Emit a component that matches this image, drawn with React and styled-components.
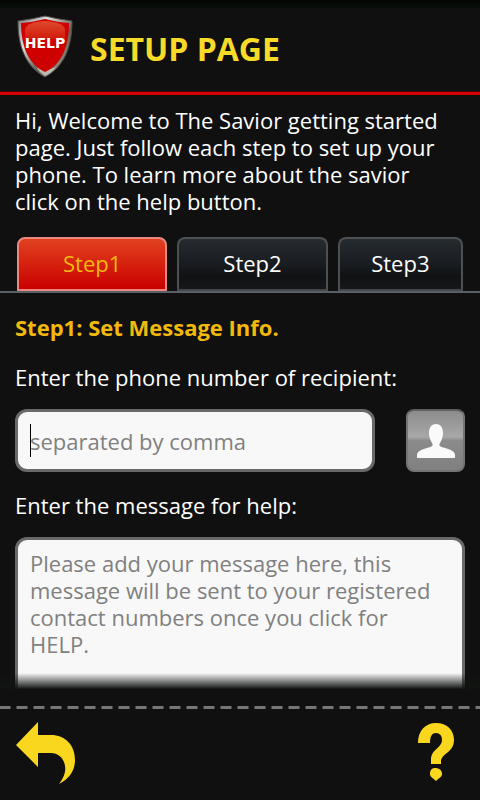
import React from "react";
import styled, { createGlobalStyle } from "styled-components";

const GlobalStyle = createGlobalStyle`
  *, *::before, *::after { box-sizing: border-box; }
  body { margin: 0; background: #101010; }
  body, button, input, textarea { font-family: "Open Sans", "Noto Sans", sans-serif; }
`;

const Page = styled.div`
  display: flex;
  flex-direction: column;
  height: 100vh;
  color: #fff;
  font-size: 22px;
  line-height: 27px;
  background: linear-gradient(#030503, #081008 8px, #101010 9px);
`;

const Header = styled.header`
  display: flex;
  align-items: center;
  gap: 16px;
  flex: none;
  height: 95px;
  padding: 0 16px 0 17px;
  border-bottom: 3px solid #d40000;
  box-shadow: inset 0 -1px #4a0000;
`;

const Title = styled.h1`
  margin: 5px 0 0;
  color: #f8da28;
  font-size: 32px;
  line-height: 40px;
  font-weight: 700;
`;

const Content = styled.main`
  flex: 1;
  min-height: 0;
  overflow: hidden;
  position: relative;

  &::after {
    content: "";
    position: absolute;
    inset: auto 0 0;
    height: 16px;
    background: linear-gradient(rgba(16, 20, 17, 0), #101411);
  }
`;

const Intro = styled.p`
  margin: 0;
  padding: 12px 15px 22px;
`;

const Tabs = styled.nav`
  display: grid;
  grid-template-columns: 6fr 6fr 5fr;
  gap: 10px;
  padding: 0 17px;
  border-bottom: 2px solid #596067;
`;

const Tab = styled.button`
  height: 54px;
  padding: 0 0 2px;
  border: 2px solid ${(p) => (p.$active ? "#ea8880" : "#4c5052")};
  border-bottom-color: ${(p) => (p.$active ? "#ea8880" : "#44474a")};
  border-radius: 8px 8px 0 0;
  background: ${(p) =>
    p.$active
      ? "linear-gradient(#e04020, #d72510 45%, #c90000)"
      : "linear-gradient(#262b2f, #191c20 50%, #101214 75%, #15171a)"};
  color: ${(p) => (p.$active ? "#f2b90c" : "#fff")};
  font-size: 22px;
  line-height: 30px;
`;

const Form = styled.form`
  display: flex;
  flex-direction: column;
  padding: 19px 15px 0;
`;

const SectionTitle = styled.h2`
  margin: 0 0 20px;
  color: #f2b90c;
  font-size: 22px;
  line-height: 30px;
  font-weight: 700;
`;

const Label = styled.label`
  margin-bottom: 17px;
  line-height: 30px;
`;

const Row = styled.div`
  display: flex;
  align-items: center;
  gap: 31px;
  margin-bottom: 18px;
`;

const InputWrap = styled.div`
  position: relative;
  flex: 1;
  min-width: 0;
`;

const TextInput = styled.input`
  display: block;
  width: 100%;
  height: 63px;
  padding: 0 12px;
  border: 3px solid #696969;
  border-radius: 12px;
  background: #f8f8f8;
  color: #000;
  font-size: 22px;
  outline: none;
  &::placeholder { color: #808080; opacity: 1; }
`;

const Caret = styled.span`
  position: absolute;
  left: 15px;
  top: 15px;
  width: 1px;
  height: 33px;
  background: #000;
`;

const ContactButton = styled.button`
  flex: none;
  width: 59px;
  height: 63px;
  padding: 0;
  border: 2px solid #747474;
  border-top-color: #605e5e;
  border-radius: 8px;
  background: linear-gradient(#8c8c8c, #a8a8a8 44%, #8b8b8b 50%, #808080);
  svg { display: block; margin: auto; }
`;

const Message = styled.textarea`
  display: block;
  width: 100%;
  height: 180px;
  padding: 10px 12px;
  border: 3px solid #696969;
  border-radius: 12px;
  background: #f8f8f8;
  color: #000;
  font-size: 22px;
  line-height: 27px;
  outline: none;
  resize: none;
  &::placeholder { color: #808080; opacity: 1; }
`;

const Footer = styled.footer`
  display: flex;
  flex: none;
  align-items: flex-start;
  justify-content: space-between;
  height: 111px;
  padding: 33px 25px 0 15px;
  background: repeating-linear-gradient(90deg, #777 0 10px, #101010 11px 16px, #777 17px) 0 17px / 100% 3px no-repeat;
`;

const IconButton = styled.button`
  padding: 0;
  border: 0;
  background: none;
  svg { display: block; }
`;

const Shield = () => (
  <svg width="57" height="64" viewBox="0 -1 57 64" aria-hidden="true">
    <defs>
      <linearGradient id="rim" x1="0" y1="0" x2="1" y2="1">
        <stop offset="0" stopColor="#777" />
        <stop offset=".3" stopColor="#ddd" />
        <stop offset=".6" stopColor="#65605a" />
        <stop offset="1" stopColor="#b5aa99" />
      </linearGradient>
      <linearGradient id="gloss" x1="0" y1="0" x2="0" y2="1">
        <stop offset="0" stopColor="#df4a2c" />
        <stop offset="1" stopColor="#d01a0c" />
      </linearGradient>
    </defs>
    <path d="M1 6Q16 4 28 1Q40 4 55 6C55 31 48 51 28 62C8 51 1 31 1 6Z" fill="url(#rim)" stroke="#514e49" />
    <path d="M28 61Q35 58 39 52L28 56L19 52Q23 58 28 61Z" fill="#bbb8ae" />
    <path d="M4 8Q17 7 28 4Q39 7 52 8C52 32 44 50 28 57C12 50 4 32 4 8Z" fill="#cf0000" />
    <path d="M8 24V14Q10 7 28 6Q46 7 48 14V24Z" fill="url(#gloss)" />
    <text x="28" y="33" fill="#fff" textAnchor="middle" fontFamily="DejaVu Sans, sans-serif" fontWeight="700" fontSize="14">HELP</text>
  </svg>
);

const Person = () => (
  <svg width="38" height="36" viewBox="0 0 38 36" aria-hidden="true">
    <path d="M19 1C24 1 26 5 26 10C26 15 24 18 23 20C21 23 24 24 28 25C35 27 38 29 38 32V35H0V32C0 29 3 27 10 25C14 24 17 23 15 20C14 18 12 15 12 10C12 5 14 1 19 1Z" fill="#fafafa" />
  </svg>
);

const BackArrow = () => (
  <svg width="61" height="62" viewBox="0 0 61 62" aria-hidden="true">
    <path d="M1 23L23 0V13H36C50 13 60 23 60 38C60 49 54 57 44 62C49 55 51 50 50 44C49 36 43 31 36 31H23V45Z" fill="#f9d71f" />
  </svg>
);

const Question = () => (
  <svg width="39" height="60" viewBox="0 0 39 60" aria-hidden="true">
    <path d="M2 21C2 9 9 1 20 1C31 1 38 8 38 18C38 31 25 31 25 40V42H15V38C15 27 26 26 26 18C26 14 24 11 20 11C16 11 14 14 14 21ZM19 46C23 46 26 48 26 52C26 55 23 56 20 59C17 56 14 55 14 52C14 48 16 46 19 46Z" fill="#f9d71f" />
  </svg>
);

export default function App() {
  return (
    <>
      <GlobalStyle />
      <Page>
        <Header>
          <Shield />
          <Title>SETUP PAGE</Title>
        </Header>
        <Content>
          <Intro>
            Hi, Welcome to The Savior getting started<br />
            page. Just follow each step to set up your<br />
            phone. To learn more about the savior<br />
            click on the help button.
          </Intro>
          <Tabs aria-label="Setup steps">
            <Tab type="button" $active aria-current="step">Step1</Tab>
            <Tab type="button">Step2</Tab>
            <Tab type="button">Step3</Tab>
          </Tabs>
          <Form onSubmit={(e) => e.preventDefault()}>
            <SectionTitle>Step1: Set Message Info.</SectionTitle>
            <Label htmlFor="recipient">Enter the phone number of recipient:</Label>
            <Row>
              <InputWrap>
                <TextInput id="recipient" type="text" placeholder="separated by comma" />
                <Caret aria-hidden="true" />
              </InputWrap>
              <ContactButton type="button" aria-label="Choose contact"><Person /></ContactButton>
            </Row>
            <Label htmlFor="message">Enter the message for help:</Label>
            <Message
              id="message"
              placeholder={"Please add your message here, this\nmessage will be sent to your registered\ncontact numbers once you click for\nHELP."}
            />
          </Form>
        </Content>
        <Footer>
          <IconButton type="button" aria-label="Back"><BackArrow /></IconButton>
          <IconButton type="button" aria-label="Help"><Question /></IconButton>
        </Footer>
      </Page>
    </>
  );
}
